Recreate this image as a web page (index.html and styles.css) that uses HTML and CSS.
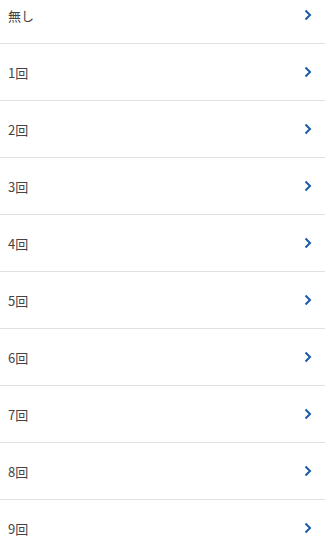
FILE: index.html
```html
<!DOCTYPE html>
<html lang="ja">
<head>
<meta charset="utf-8">
<link rel="stylesheet" href="styles.css">
</head>
<body>
<ul class="list">
  <li class="row"><span class="label">無し</span><svg class="chev" viewBox="0 0 8 12"><path d="M1.5 1.5 L6 6 L1.5 10.5" /></svg></li>
  <li class="row"><span class="label">1回</span><svg class="chev" viewBox="0 0 8 12"><path d="M1.5 1.5 L6 6 L1.5 10.5" /></svg></li>
  <li class="row"><span class="label">2回</span><svg class="chev" viewBox="0 0 8 12"><path d="M1.5 1.5 L6 6 L1.5 10.5" /></svg></li>
  <li class="row"><span class="label">3回</span><svg class="chev" viewBox="0 0 8 12"><path d="M1.5 1.5 L6 6 L1.5 10.5" /></svg></li>
  <li class="row"><span class="label">4回</span><svg class="chev" viewBox="0 0 8 12"><path d="M1.5 1.5 L6 6 L1.5 10.5" /></svg></li>
  <li class="row"><span class="label">5回</span><svg class="chev" viewBox="0 0 8 12"><path d="M1.5 1.5 L6 6 L1.5 10.5" /></svg></li>
  <li class="row"><span class="label">6回</span><svg class="chev" viewBox="0 0 8 12"><path d="M1.5 1.5 L6 6 L1.5 10.5" /></svg></li>
  <li class="row"><span class="label">7回</span><svg class="chev" viewBox="0 0 8 12"><path d="M1.5 1.5 L6 6 L1.5 10.5" /></svg></li>
  <li class="row"><span class="label">8回</span><svg class="chev" viewBox="0 0 8 12"><path d="M1.5 1.5 L6 6 L1.5 10.5" /></svg></li>
  <li class="row"><span class="label">9回</span><svg class="chev" viewBox="0 0 8 12"><path d="M1.5 1.5 L6 6 L1.5 10.5" /></svg></li>
</ul>
</body>
</html>
```
FILE: styles.css
```css
html, body {
  margin: 0;
  padding: 0;
  background: #fff;
  overflow: hidden;
}
body {
  font-family: "Noto Sans CJK JP", "Noto Sans", sans-serif;
  font-size: 13px;
  color: #444;
}
.list {
  list-style: none;
  margin: -13px 0 0 0;
  padding: 0;
}
.row {
  height: 56px;
  border-bottom: 1px solid #e0e0e0;
  display: flex;
  align-items: center;
  justify-content: space-between;
  padding: 0 13px 0 8px;
}
.chev {
  width: 8px;
  height: 12px;
  fill: none;
  stroke: #1a5aa8;
  stroke-width: 2;
}
```
